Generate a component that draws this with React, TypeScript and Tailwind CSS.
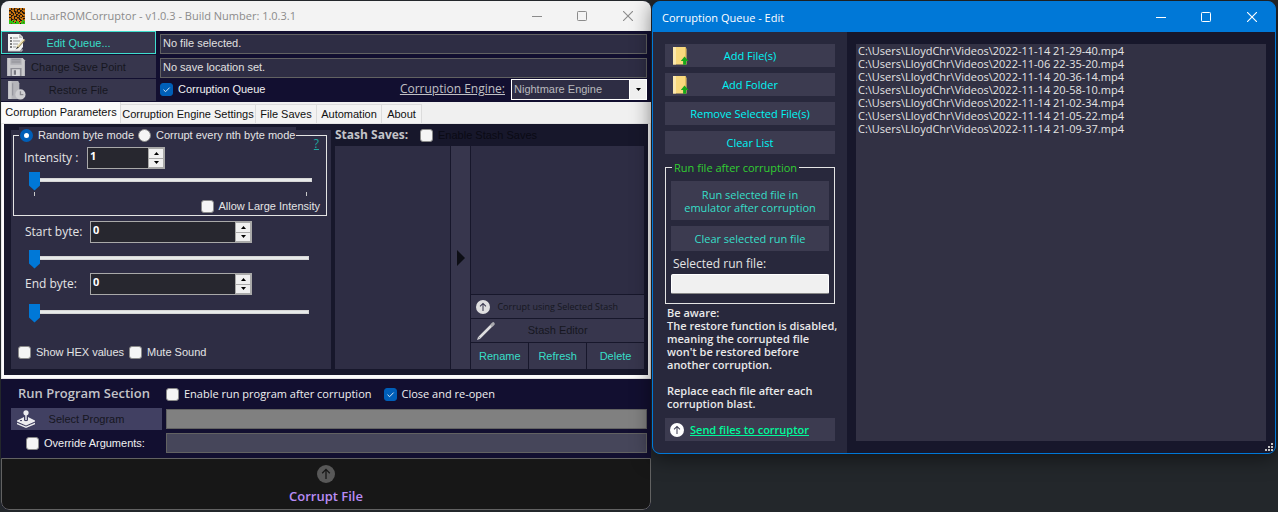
import React, { useState } from "react";

const segoe = "font-['Open_Sans','Noto_Sans',sans-serif]";
const sans = "font-['Liberation_Sans',Arial,sans-serif]";

const files = [
  "C:\\Users\\LloydChr\\Videos\\2022-11-14 21-29-40.mp4",
  "C:\\Users\\LloydChr\\Videos\\2022-11-06 22-35-20.mp4",
  "C:\\Users\\LloydChr\\Videos\\2022-11-14 20-36-14.mp4",
  "C:\\Users\\LloydChr\\Videos\\2022-11-14 20-58-10.mp4",
  "C:\\Users\\LloydChr\\Videos\\2022-11-14 21-02-34.mp4",
  "C:\\Users\\LloydChr\\Videos\\2022-11-14 21-05-22.mp4",
  "C:\\Users\\LloydChr\\Videos\\2022-11-14 21-09-37.mp4",
];

/* ---------- icons ---------- */

function AppIcon() {
  const rows = [
    "oo.oo.ddoo.oo.oo",
    "oo.dd.oo...oo.dd",
    "..ooo.oo.oo..ooo",
    "dd.oo..d.oo.d.oo",
    "oo..oo.dd..oo..d",
    "oodd.o.oo.ddoo..",
    "..oo.oo..oo..ooo",
    "oo..doo.dd.oo.oo",
    "oo.oo...oo.oo..d",
    "..doo.oo..dd.ooo",
    "oo.oo.oodd.ooo..",
    "oo..dd..oo..oodo",
    "gg.oggo.ooo..ggo",
    "gggg.ooggo.ooggg",
    "gggggo.gggooggdg",
    "ggdgggggggo.gggg",
  ];
  const fill: Record<string, string> = { o: "#c9740f", d: "#7b430c", g: "#2fc416", ".": "#23180c" };
  return (
    <svg width="16" height="16" viewBox="0 0 16 16" shapeRendering="crispEdges" aria-hidden="true">
      {rows.map((row, y) =>
        row.split("").map((c, x) => <rect key={x + "-" + y} x={x} y={y} width="1" height="1" fill={fill[c]} />)
      )}
    </svg>
  );
}

function EditIcon() {
  return (
    <svg width="20" height="20" viewBox="0 0 20 20" aria-hidden="true">
      <path d="M2 1h12l3 3v10l-3 4H2z" fill="#f4f4f4" />
      <path d="M13 1v4h4z" fill="#b9b9b9" />
      <path d="M4 5h2M4 8h2M4 11h2M4 14h2" stroke="#555" strokeWidth="1.4" />
      <path d="M7 5h5M7 8h7M7 11h5M7 14h3" stroke="#999" />
      <path d="M18.5 6.5 11 14.5" stroke="#e9dcae" strokeWidth="2.2" />
      <path d="M18.8 7.2 11.8 15" stroke="#6b5d34" strokeWidth="0.8" />
      <path d="M11.5 13.5 9.6 16.4l3-1.6z" fill="#333" />
      <path d="M16 16v2H2" stroke="#ccc" fill="none" />
    </svg>
  );
}

function FloppyIcon() {
  return (
    <svg width="20" height="20" viewBox="0 0 18 18" aria-hidden="true">
      <path d="M1 1h14l2 2v14H1z" fill="#c9c9cc" />
      <path d="M4 1h10v6H4z" fill="#aeaeb4" />
      <path d="M5 2.5h8M5 4.5h8" stroke="#8d8d94" />
      <path d="M4 10h10v7H4z" fill="#8f8f97" />
      <path d="M5.5 11h7v6h-7z" fill="#d8d8da" />
      <path d="M7 12h2v4H7z" fill="#77777f" />
    </svg>
  );
}

function RestoreIcon() {
  return (
    <svg width="20" height="20" viewBox="0 0 18 18" aria-hidden="true">
      <path d="M2 1h9l1 2v14H2z" fill="#b5b5ba" />
      <path d="M2 1h3v16H2z" fill="#cacacd" />
      <path d="M6 3v11" stroke="#93939a" />
      <circle cx="13" cy="13" r="4.6" fill="#cfcfd2" />
      <path d="M13 10.2v3h2.6" stroke="#8a8a90" fill="none" strokeWidth="1.2" />
    </svg>
  );
}

function UpCircle({ size, disc, arrow }: { size: number; disc: string; arrow: string }) {
  return (
    <svg width={size} height={size} viewBox="0 0 18 18" aria-hidden="true">
      <circle cx="9" cy="9" r="9" fill={disc} />
      <path d="M9 14V4.5M5.2 8.2 9 4.4l3.8 3.8" stroke={arrow} strokeWidth="1.3" fill="none" />
    </svg>
  );
}

function PencilIcon() {
  return (
    <svg width="20" height="20" viewBox="0 0 20 20" aria-hidden="true">
      <path d="M3.5 16.5 15.5 4.5" stroke="#dededf" strokeWidth="2.6" />
      <path d="M1 19l1.2-3.6 2.4 2.4z" fill="#cfcfd2" />
      <path d="M16 4l1.2-1.2" stroke="#a9a9ae" strokeWidth="3.2" strokeLinecap="round" />
    </svg>
  );
}

function JoystickIcon() {
  return (
    <svg width="20" height="18" viewBox="0 0 20 18" aria-hidden="true">
      <circle cx="10" cy="2.8" r="2.6" fill="#ededf0" />
      <path d="M9.3 5h1.4v5H9.3z" fill="#ededf0" />
      <path d="M8 7 1 10.4v1.2l9 3.8 9-3.8v-1.2L12 7v3.4l-2 .8-2-.8z" fill="#ededf0" />
      <path d="M1 12.8v1.4L10 18l9-3.8v-1.4l-9 3.8z" fill="#ededf0" />
      <path d="M4 10.6h2" stroke="#414062" />
    </svg>
  );
}

function FolderIcon() {
  return (
    <svg width="18" height="20" viewBox="0 0 18 20" aria-hidden="true">
      <path d="M1 1h12.5l1 2v15.5H1z" fill="#f9d97d" />
      <path d="M1 1h3v17.5H1z" fill="#fbe7ac" />
      <path d="M13.5 1.5v17" stroke="#e3bd5c" />
      <path d="M12.5 10.5 8.8 15h2.3v3.8h3V15h2.4z" fill="#17a81a" />
    </svg>
  );
}

/* ---------- window chrome ---------- */

function WindowButtons() {
  return (
    <div className="ml-auto flex h-full">
      <button type="button" aria-label="Minimize" className="flex h-full w-[45px] items-center justify-center">
        <svg width="10" height="10" viewBox="0 0 10 10"><path d="M0 5.5h10" stroke="currentColor" /></svg>
      </button>
      <button type="button" aria-label="Maximize" className="flex h-full w-[45px] items-center justify-center">
        <svg width="10" height="10" viewBox="0 0 10 10"><rect x="0.5" y="0.5" width="9" height="9" rx="0.8" fill="none" stroke="currentColor" /></svg>
      </button>
      <button type="button" aria-label="Close" className="flex h-full w-[47px] items-center justify-center">
        <svg width="10" height="10" viewBox="0 0 10 10"><path d="M0 0l10 10M10 0 0 10" stroke="currentColor" strokeWidth="1.1" /></svg>
      </button>
    </div>
  );
}

/* ---------- form controls ---------- */

function Check({ label, checked = false, className = "" }: { label: string; checked?: boolean; className?: string }) {
  return (
    <label className={"flex items-center gap-[5px] whitespace-nowrap leading-4 " + className}>
      <span className="relative flex size-[13px] shrink-0">
        <input
          type="checkbox"
          defaultChecked={checked}
          className="peer size-[13px] appearance-none rounded-[3px] border border-[#8a8a8a] bg-[#f5f5f5] checked:border-[#005fb8] checked:bg-[#005fb8]"
        />
        <svg className="pointer-events-none absolute inset-0 hidden peer-checked:block" width="13" height="13" viewBox="0 0 13 13">
          <path d="M3.5 6.7 5.6 8.7 9.6 4.6" stroke="#d8e8f6" fill="none" />
        </svg>
      </span>
      {label}
    </label>
  );
}

function Radio({ label, checked = false }: { label: string; checked?: boolean }) {
  return (
    <label className="flex items-center gap-[5px] whitespace-nowrap">
      <input
        type="radio"
        name="mode"
        defaultChecked={checked}
        className="size-[13px] shrink-0 appearance-none rounded-full border border-[#8a8a8a] bg-[#f5f5f5] checked:border-4 checked:border-[#005fb8] checked:bg-white"
      />
      {label}
    </label>
  );
}

function NumberBox({ id, value, width }: { id: string; value: string; width: string }) {
  return (
    <div className={"flex h-[22px] border border-[#a9a9a9] bg-[#27272f] " + width}>
      <input id={id} defaultValue={value} className={"w-0 min-w-0 flex-1 bg-transparent pb-[3px] pl-[2px] text-[11px] font-bold text-white outline-none " + segoe} />
      <div className="flex w-4 flex-col bg-[#a9a9a9] p-px">
        <button type="button" aria-label="Increase" className="flex flex-1 items-center justify-center border-b border-[#a9a9a9] bg-[#f0f0f0]">
          <svg width="5" height="3" viewBox="0 0 5 3"><path d="M0 3 2.5 0 5 3z" fill="#000" /></svg>
        </button>
        <button type="button" aria-label="Decrease" className="flex flex-1 items-center justify-center bg-[#f0f0f0]">
          <svg width="5" height="3" viewBox="0 0 5 3"><path d="M0 0h5L2.5 3z" fill="#000" /></svg>
        </button>
      </div>
    </div>
  );
}

function Slider({ label, className }: { label: string; className: string }) {
  return (
    <input
      type="range"
      aria-label={label}
      min={0}
      max={100}
      defaultValue={0}
      className={
        "block h-[19px] appearance-none bg-transparent [&::-webkit-slider-runnable-track]:h-1 [&::-webkit-slider-runnable-track]:border [&::-webkit-slider-runnable-track]:border-[#d6d6d6] [&::-webkit-slider-runnable-track]:bg-[#e7eaea] [&::-webkit-slider-thumb]:-mt-[7px] [&::-webkit-slider-thumb]:-ml-px [&::-webkit-slider-thumb]:h-[19px] [&::-webkit-slider-thumb]:w-[11px] [&::-webkit-slider-thumb]:appearance-none [&::-webkit-slider-thumb]:bg-[#0078d7] [&::-webkit-slider-thumb]:[clip-path:polygon(0_0,100%_0,100%_74%,50%_100%,0_74%)] " +
        className
      }
    />
  );
}

function IconButton({ icon, label, className, disabled = false }: { icon: React.ReactNode; label: string; className: string; disabled?: boolean }) {
  return (
    <button type="button" disabled={disabled} className={"relative flex items-center justify-center " + className}>
      <span className="absolute inset-y-0 left-[5px] flex items-center">{icon}</span>
      {label}
    </button>
  );
}

/* ---------- main window ---------- */

const tabs = [
  ["Corruption Parameters", "w-[119px]"],
  ["Corruption Engine Settings", "w-[135px]"],
  ["File Saves", "w-[61px]"],
  ["Automation", "w-[65px]"],
  ["About", "w-[40px]"],
];

function ParametersPanel() {
  return (
    <div className="flex w-[320px] shrink-0 flex-col self-stretch bg-[#2e2d44] pb-[9px] text-[#e4e4e4]">
      <fieldset className="relative mt-[5px] mr-[4px] ml-[2px] h-[81px] border border-[#e4e4e4] pt-[11px]">
        <div className="absolute -top-[9px] left-[5px] flex h-[17px] items-center gap-[4px] bg-[#2e2d44] px-px">
          <Radio label="Random byte mode" checked />
          <Radio label="Corrupt every nth byte mode" />
        </div>
        <a href="#help" className={"absolute top-0 right-[7px] text-[12px] leading-4 text-[#1fa8a0] underline " + segoe}>?</a>
        <div className="flex items-center">
          <label htmlFor="intensity" className={"w-[63px] pl-[10px] text-[12px] leading-4 whitespace-nowrap " + segoe}>Intensity :</label>
          <span className="pl-[10px]"><NumberBox id="intensity" value="1" width="w-[78px]" /></span>
        </div>
        <Slider label="Intensity" className="ml-[15px] mt-px w-[283px]" />
        <div className="mt-[3px] ml-[20px] flex h-[5px] w-[273px] justify-between">
          <span className="h-1 w-px bg-[#c8c8c8]" />
          <span className="h-1 w-px bg-[#c8c8c8]" />
        </div>
        <Check label="Allow Large Intensity" className="mr-[6px] mt-px justify-end" />
      </fieldset>

      <div className="mt-[5px] flex items-center">
        <label htmlFor="start" className={"w-[79px] pl-[14px] text-[12px] leading-4 whitespace-nowrap " + segoe}>Start byte:</label>
        <NumberBox id="start" value="0" width="w-[162px]" />
      </div>
      <Slider label="Start byte" className="ml-[18px] mt-[5px] w-[280px]" />
      <div className="mt-[6px] flex items-center">
        <label htmlFor="end" className={"w-[79px] pl-[14px] text-[12px] leading-4 whitespace-nowrap " + segoe}>End byte:</label>
        <NumberBox id="end" value="0" width="w-[162px]" />
      </div>
      <Slider label="End byte" className="ml-[18px] mt-[7px] w-[280px]" />

      <div className="mt-auto flex gap-[5px] pl-[7px]">
        <Check label="Show HEX values" />
        <Check label="Mute Sound" />
      </div>
    </div>
  );
}

function StashPanel() {
  return (
    <div className="flex min-w-0 flex-1 flex-col">
      <div className="mb-[3px] flex h-[16px] items-center">
        <h2 className={"w-[85px] text-[12px] leading-4 font-bold whitespace-nowrap text-[#c3c3c8] " + segoe}>Stash Saves:</h2>
        <Check label="Enable Stash Saves" className="text-[#0a0a14]" />
      </div>
      <div className="flex h-[223px] gap-px">
        <div role="listbox" aria-label="Stash saves" className="flex-[115] bg-[#2e2d44]" />
        <button type="button" aria-label="Expand" className="flex w-[19px] items-center justify-center bg-[#37364d]">
          <svg width="8" height="16" viewBox="0 0 8 16"><path d="M0 0l8 8-8 8z" fill="#0d0e15" /></svg>
        </button>
        <div className="flex flex-[172] flex-col gap-px">
          <div role="listbox" aria-label="Stash contents" className="flex-1 bg-[#2e2d44]" />
          <IconButton disabled icon={<UpCircle size={14} disc="#dfdfe0" arrow="#37364d" />} label="Corrupt using Selected Stash" className={"h-[23px] bg-[#37364d] text-[9px] text-[#16161f] " + segoe} />
          <IconButton disabled icon={<PencilIcon />} label="Stash Editor" className="h-[23px] bg-[#37364d] text-[#16161f]" />
          <div className="grid h-[26px] grid-cols-3 gap-px text-[#37dfc8]">
            <button type="button" className="bg-[#37364d]">Rename</button>
            <button type="button" className="bg-[#37364d]">Refresh</button>
            <button type="button" className="bg-[#37364d]">Delete</button>
          </div>
        </div>
      </div>
    </div>
  );
}

function MainWindow() {
  const [active, setActive] = useState(0);
  const field = "w-full border border-[#626262] bg-[#2e2d44] px-[2px] pb-[2px] text-[#e0e0e0] outline-none";
  return (
    <main className={"flex min-w-0 flex-col overflow-hidden rounded-lg bg-[#120f30] text-[11px] " + sans}>
      <header className="flex h-[30px] items-center bg-[#f3f3f3] pl-[8px] text-[#8b8b8b]">
        <AppIcon />
        <h1 className={"pl-[5px] text-[11px] whitespace-nowrap " + segoe}>LunarROMCorruptor - v1.0.3 - Build Number: 1.0.3.1</h1>
        <WindowButtons />
      </header>

      <section className="flex h-[71px] gap-1 pr-1">
        <div className="flex w-[155px] shrink-0 flex-col gap-px">
          <IconButton icon={<EditIcon />} label="Edit Queue..." className="h-[23px] border border-[#40dfcf] bg-[#37364d] pt-px text-[#37dfc8] [&>span]:left-1" />
          <IconButton disabled icon={<FloppyIcon />} label="Change Save Point" className="h-[23px] bg-[#37364d] pt-px text-[#16161f]" />
          <IconButton disabled icon={<RestoreIcon />} label="Restore File" className="h-[22px] bg-[#37364d] text-[#16161f]" />
        </div>
        <div className="flex min-w-0 flex-1 flex-col pt-[3px]">
          <input aria-label="File" readOnly defaultValue="No file selected." className={"h-5 " + field} />
          <input aria-label="Save location" readOnly defaultValue="No save location set." className={"mt-1 h-5 " + field} />
          <div className="flex h-[22px] items-center">
            <Check label="Corruption Queue" checked className="text-[#f0f0f0]" />
            <label htmlFor="engine" className={"ml-auto pr-[6px] text-[12px] leading-4 whitespace-nowrap text-[#c0c0c4] underline " + segoe}>Corruption Engine:</label>
            <div className="relative flex h-[21px] w-[136px]">
              <select id="engine" className="w-full appearance-none border border-white bg-[#2e2d44] pl-[2px] text-[#b9b9bd]">
                <option>Nightmare Engine</option>
              </select>
              <span className="pointer-events-none absolute inset-y-0 right-0 flex w-[18px] items-center justify-center border border-white bg-[#efefef]">
                <svg width="5" height="3" viewBox="0 0 5 3"><path d="M0 0h5L2.5 3z" fill="#000" /></svg>
              </span>
            </div>
          </div>
        </div>
      </section>

      <section className="bg-[#f0f0f0]">
        <div role="tablist" className="flex h-[21px] items-end pl-px">
          {tabs.map(([name, width], i) => (
            <button
              key={name}
              type="button"
              role="tab"
              aria-selected={i === active}
              onClick={() => setActive(i)}
              className={
                "flex items-center justify-center border-r border-[#dcdcdc] whitespace-nowrap text-[#101010] " + width +
                (i === active ? " h-[21px] bg-[#fbfbfb]" : " h-[19px] border-t bg-[#f3f3f3]")
              }
            >
              {name}
            </button>
          ))}
        </div>
        <div className="border-[3px] border-t border-b-4 border-[#fbfbfb] bg-[#17172b] pb-[6px] pl-[7px] pr-1 pt-[3px] outline -outline-offset-1 outline-[#e4e4e4]">
          <div className="flex gap-[4px]">
            <div className="flex pt-[3px]"><ParametersPanel /></div>
            <StashPanel />
          </div>
        </div>
      </section>

      <section className="flex h-[79px] flex-col pr-1 pt-[7px] text-[#f0f0f0]">
        <div className={"flex h-4 items-center text-[11px] " + segoe}>
          <h2 className="w-[165px] pl-[17px] text-[13px] font-semibold whitespace-nowrap text-[#c3c3c8]">Run Program Section</h2>
          <Check label="Enable run program after corruption" />
          <Check label="Close and re-open" checked className="ml-[12px]" />
        </div>
        <div className="mt-[6px] flex items-center">
          <IconButton disabled icon={<JoystickIcon />} label="Select Program" className="ml-[10px] mr-1 h-[22px] w-[151px] shrink-0 bg-[#414062] text-[#16161f]" />
          <input aria-label="Program" disabled className="h-5 w-0 min-w-0 flex-1 border border-[#626262] bg-[#808080]" />
        </div>
        <div className="mt-[3px] flex items-center">
          <Check label="Override Arguments:" className="w-[165px] pl-[25px]" />
          <input aria-label="Arguments" className="h-5 w-0 min-w-0 flex-1 border border-[#626262] bg-[#46465a]" />
        </div>
      </section>

      <button type="button" className={"flex h-[52px] flex-col items-center rounded-b-lg border border-[#626262] bg-[#171717] pt-[6px] text-[13px] leading-5 font-semibold text-[#b98cf5] " + segoe}>
        <UpCircle size={18} disc="#585858" arrow="#171717" />
        <span className="pt-[3px]">Corrupt File</span>
      </button>
    </main>
  );
}

/* ---------- queue window ---------- */

function QueueWindow() {
  const btn = "h-[23px] w-full bg-[#3c3b50]";
  return (
    <aside className={"flex min-w-0 flex-col self-start overflow-hidden rounded-lg border border-[#0078d7] bg-[#0078d7] text-[11px] leading-[13px] shadow-[0_4px_20px_rgba(0,0,0,0.5)] " + segoe}>
      <header className="flex h-[30px] items-center pl-[9px] text-white">
        <h2 className="text-[11px] whitespace-nowrap">Corruption Queue - Edit</h2>
        <WindowButtons />
      </header>
      <div className="flex">
        <div className="flex w-[194px] shrink-0 flex-col bg-[#28283c] px-3 pb-3 pt-3">
          <div className="flex flex-col gap-[6px] text-[#00f5f5]">
            <IconButton icon={<FolderIcon />} label="Add File(s)" className={btn + " [&>span]:left-[7px]"} />
            <IconButton icon={<FolderIcon />} label="Add Folder" className={btn + " [&>span]:left-[7px]"} />
            <button type="button" className={btn}>Remove Selected File(s)</button>
            <button type="button" className={btn}>Clear List</button>
          </div>
          <fieldset className="mt-[7px] flex flex-col border border-[#e4e4e4] px-[5px] pb-[9px]">
            <legend className="ml-[1px] px-[2px] text-[#32cd32]">Run file after corruption</legend>
            <button type="button" className="mt-[7px] h-[39px] bg-[#3c3b50] text-[#37dfc8]">Run selected file in<br />emulator after corruption</button>
            <button type="button" className="mt-[6px] h-[25px] bg-[#3c3b50] text-[#37dfc8]">Clear selected run file</button>
            <label htmlFor="runfile" className="mt-[5px] pl-[2px] text-[12px] leading-4 text-[#e4e4e4]">Selected run file:</label>
            <input id="runfile" className="mt-[2px] h-5 rounded-[2px] border border-white border-b-[#868686] bg-[#f0f0f0] px-1 text-black" />
          </fieldset>
          <div className="mt-[2px] -mr-3 pl-[2px] font-semibold text-[#e9e9e9]">
            <p>Be aware:<br />The restore function is disabled,<br />meaning the corrupted file<br />won't be restored before<br />another corruption.</p>
            <p className="mt-[13px]">Replace each file after each<br />corruption blast.</p>
          </div>
          <button type="button" className="mt-[8px] flex h-[23px] items-center gap-[6px] bg-[#3c3b50] pl-[5px] font-semibold text-[#00fa9a] underline">
            <UpCircle size={14} disc="#ffffff" arrow="#3c3b50" />
            Send files to corruptor
          </button>
        </div>
        <div className="relative flex min-w-0 flex-1 bg-[#17172b] px-[9px] py-3">
          <ul className="flex-1 overflow-hidden bg-[#323144] pl-[2px] text-[#e4e4e4]">
            {files.map((f) => <li key={f} className="whitespace-nowrap">{f}</li>)}
          </ul>
          <svg className="absolute right-[2px] bottom-[2px]" width="8" height="8" viewBox="0 0 8 8" aria-hidden="true">
            <path d="M6 0h2v2H6zM3 3h2v2H3zM6 3h2v2H6zM0 6h2v2H0zM3 6h2v2H3zM6 6h2v2H6z" fill="#c4c4c4" />
          </svg>
        </div>
      </div>
    </aside>
  );
}

export default function App() {
  return (
    <div className="grid min-h-screen grid-cols-[650fr_624fr] content-start items-start gap-px bg-[#23272b] py-px pl-px pr-[2px]">
      <MainWindow />
      <QueueWindow />
    </div>
  );
}
